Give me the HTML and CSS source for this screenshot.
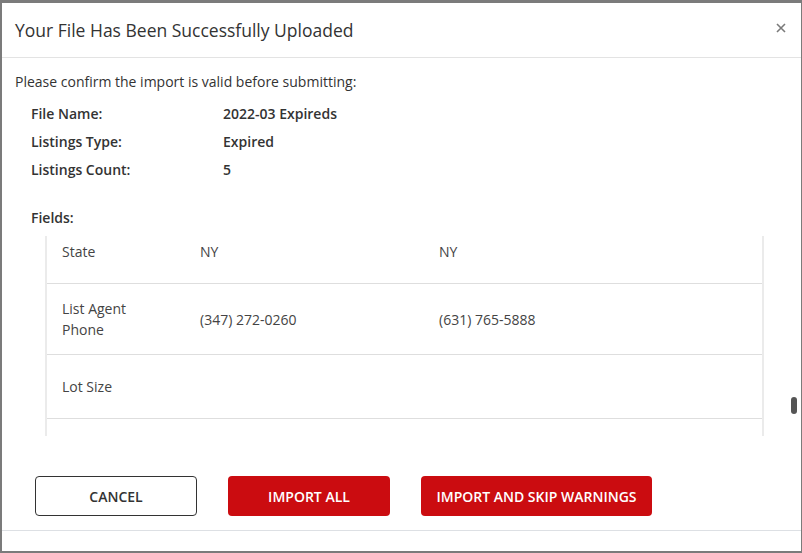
FILE: index.html
```html
<!DOCTYPE html>
<html>
<head>
<meta charset="utf-8">
<link rel="stylesheet" href="styles.css">
</head>
<body>
<div class="modal">
  <div class="header">
    <h1 class="title">Your File Has Been Successfully Uploaded</h1>
    <svg class="close" width="10" height="10" viewBox="0 0 10 10"><path d="M1 1L9 9M9 1L1 9" stroke="#7a7a7a" stroke-width="1.6"/></svg>
  </div>
  <div class="body">
    <p class="intro">Please confirm the import is valid before submitting:</p>
    <div class="info">
      <div class="label">File Name:</div><div class="value">2022-03 Expireds</div>
      <div class="label">Listings Type:</div><div class="value">Expired</div>
      <div class="label">Listings Count:</div><div class="value">5</div>
    </div>
    <div class="fields-label">Fields:</div>
    <div class="table-wrap">
      <div class="table">
        <div class="row"><div class="c1">State</div><div class="c2">NY</div><div class="c3">NY</div></div>
        <div class="row tall"><div class="c1">List Agent<br>Phone</div><div class="c2">(347) 272-0260</div><div class="c3">(631) 765-5888</div></div>
        <div class="row"><div class="c1">Lot Size</div><div class="c2"></div><div class="c3"></div></div>
        <div class="row"><div class="c1"></div><div class="c2"></div><div class="c3"></div></div>
      </div>
    </div>
  </div>
  <div class="footer">
    <button class="btn btn-outline">CANCEL</button>
    <button class="btn btn-red btn-a">IMPORT ALL</button>
    <button class="btn btn-red btn-b">IMPORT AND SKIP WARNINGS</button>
  </div>
  <div class="thumb"></div>
</div>
</body>
</html>
```

FILE: styles.css
```css
html, body {
  margin: 0;
  padding: 0;
}
body {
  background: #7b7b7b;
  width: 802px;
  height: 553px;
  overflow: hidden;
  font-family: "Open Sans", "Liberation Sans", sans-serif;
  color: #333;
}
.modal {
  position: relative;
  margin: 3px 1px 0 2px;
  width: 799px;
  height: 548px;
  background: #fff;
}
.header {
  height: 54px;
  display: flex;
  align-items: center;
  justify-content: space-between;
  padding: 0 15px 0 13px;
  border-bottom: 1px solid #e3e3e3;
}
.title {
  margin: 0;
  font-size: 17.5px;
  font-weight: 400;
  color: #333;
}
.close {
  margin-top: -4px;
}
.body {
  padding: 14px 13px 0;
}
.intro {
  margin: 0;
  font-size: 14px;
  line-height: 20px;
}
.info {
  margin-top: 8px;
  padding-left: 16px;
  display: grid;
  grid-template-columns: 192px 1fr;
  font-size: 14px;
  line-height: 28px;
  font-weight: 600;
}
.fields-label {
  margin-top: 20px;
  padding-left: 16px;
  font-size: 14px;
  line-height: 28px;
  font-weight: 600;
}
.table-wrap {
  margin: 4px 0 0 30px;
  width: 715px;
  height: 200px;
  overflow: hidden;
  border-left: 2px solid #ebebeb;
  border-right: 2px solid #ebebeb;
}
.table {
  margin-top: -16px;
}
.row {
  display: flex;
  align-items: center;
  min-height: 63px;
  border-bottom: 1px solid #dedede;
  font-size: 14px;
  line-height: 21px;
  color: #444;
}
.row.tall {
  min-height: 70px;
}
.c1 {
  width: 138px;
  padding-left: 15px;
}
.c2 {
  width: 239px;
}
.c3 {
  flex: 1;
}
.footer {
  margin-top: 40px;
  padding: 0 0 14px 33px;
  display: flex;
  gap: 31px;
  border-bottom: 1px solid #dde0e4;
}
.btn {
  height: 40px;
  border-radius: 4px;
  font-family: "Open Sans", "Liberation Sans", sans-serif;
  font-size: 14px;
  font-weight: 600;
  padding: 0;
  cursor: pointer;
}
.btn-outline {
  width: 162px;
  background: #fff;
  border: 1px solid #333;
  color: #333;
}
.btn-red {
  background: #cb0c10;
  border: none;
  color: #fff;
}
.btn-a {
  width: 162px;
}
.btn-b {
  width: 231px;
}
.thumb {
  position: absolute;
  left: 789px;
  top: 394px;
  width: 6px;
  height: 17px;
  border-radius: 3px;
  background: #555;
}
```
